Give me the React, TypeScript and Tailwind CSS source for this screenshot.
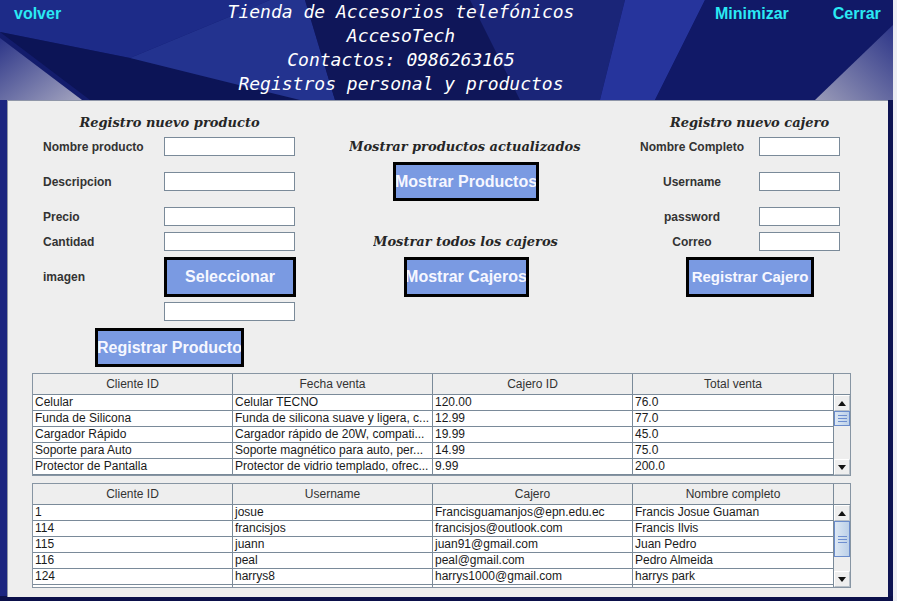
import React from 'react';

const SANS = "font-['Liberation_Sans',Arial,sans-serif]";

function Background() {
  return (
    <svg className="absolute inset-0 h-full w-full" viewBox="0 0 893 601" preserveAspectRatio="none">
      <defs>
        <linearGradient id="wedgeL" x1="0" y1="0" x2="1" y2="1">
          <stop offset="0" stopColor="#2c3588" />
          <stop offset="1" stopColor="#a3a4bf" />
        </linearGradient>
        <linearGradient id="wedgeR" x1="1" y1="0" x2="0" y2="1">
          <stop offset="0" stopColor="#2c3588" />
          <stop offset="1" stopColor="#9a9bb8" />
        </linearGradient>
      </defs>
      <rect x="0" y="0" width="893" height="601" fill="#131c6c" />
      <polygon points="0,0 270,0 130,58 0,32" fill="#1d2b88" />
      <polygon points="0,32 130,58 360,72 330,100 90,100" fill="#0c1456" />
      <polygon points="130,58 270,0 305,0 335,100 300,100" fill="#23338f" />
      <polygon points="0,38 82,100 0,100" fill="url(#wedgeL)" />
      <polygon points="305,0 625,0 600,100 335,100" fill="#0f1659" />
      <polygon points="470,0 625,0 600,100 520,100" fill="#1a2578" />
      <polygon points="625,0 705,0 655,100 600,100" fill="#26349c" />
      <polygon points="705,0 893,0 893,35 835,100 655,100" fill="#111967" />
      <polygon points="893,25 893,100 815,100" fill="url(#wedgeR)" />
      <rect x="0" y="100" width="8" height="501" fill="#1b2580" />
      <rect x="886" y="100" width="7" height="501" fill="#0d1352" />
      <rect x="0" y="596" width="893" height="5" fill="#0b104a" />
    </svg>
  );
}

function Field({ w = 'w-[131px]' }: { w?: string }) {
  return <div className={`h-[19px] ${w} shrink-0 border border-[#7a8a99] bg-white`} />;
}

function BlueButton({ label, className }: { label: string; className: string }) {
  return (
    <div
      className={`flex shrink-0 items-center justify-center overflow-hidden whitespace-nowrap border-[3px] border-black bg-[#7a9ae2] font-bold text-[#f6f7ff] ${className}`}
    >
      {label}
    </div>
  );
}

function Arrow({ up }: { up?: boolean }) {
  return (
    <div className="flex h-[16px] items-center justify-center border border-t-white border-l-white border-b-[#b8c0c8] border-r-[#b8c0c8] bg-[#eeeeee]">
      <svg width="8" height="5" viewBox="0 0 8 5">
        {up ? <polygon points="0,5 8,5 4,0" fill="#111" /> : <polygon points="0,0 8,0 4,5" fill="#111" />}
      </svg>
    </div>
  );
}

function Thumb({ h }: { h: string }) {
  return (
    <div className={`${h} flex flex-col items-center justify-center gap-[2px] border border-[#6a8ccb] bg-gradient-to-r from-[#dde8f4] to-[#bcd0e8]`}>
      <div className="h-px w-[9px] bg-[#6d8ed0]" />
      <div className="h-px w-[9px] bg-[#6d8ed0]" />
      <div className="h-px w-[9px] bg-[#6d8ed0]" />
    </div>
  );
}

const colW = ['w-[200px]', 'w-[200px]', 'w-[200px]', 'w-[201px]'];

function DataTable({
  headers,
  rows,
  bodyH,
  thumbH,
}: {
  headers: string[];
  rows: string[][];
  bodyH: string;
  thumbH: string;
}) {
  return (
    <div className={`ml-[24px] w-[819px] border border-[#8795a3] bg-[#eeeeee] ${SANS} text-[12px]`}>
      <div className="flex h-[21px] border-b border-[#7a8a99] text-[#333]">
        {headers.map((h, i) => (
          <div key={i} className={`${colW[i]} shrink-0 border-r border-[#7a8a99] text-center leading-[20px]`}>
            {h}
          </div>
        ))}
        <div className="w-[16px] shrink-0" />
      </div>
      <div className="flex">
        <div className={`${bodyH} overflow-hidden bg-white`}>
          {rows.map((r, ri) => (
            <div key={ri} className="flex h-[16px] border-b border-[#7a8a99] text-[#1a1a1a]">
              {r.map((c, ci) => (
                <div
                  key={ci}
                  className={`${colW[ci]} shrink-0 overflow-hidden whitespace-nowrap border-r border-[#7a8a99] pl-[2px] leading-[15px]`}
                >
                  {c}
                </div>
              ))}
            </div>
          ))}
        </div>
        <div className="flex w-[16px] shrink-0 flex-col bg-[#eeeeee]">
          <Arrow up />
          <div className="flex-1">
            <Thumb h={thumbH} />
          </div>
          <Arrow />
        </div>
      </div>
    </div>
  );
}

const ventas = [
  ['Celular', 'Celular TECNO', '120.00', '76.0'],
  ['Funda de Silicona', 'Funda de silicona suave y ligera, c...', '12.99', '77.0'],
  ['Cargador Rápido', 'Cargador rápido de 20W, compati...', '19.99', '45.0'],
  ['Soporte para Auto', 'Soporte magnético para auto, per...', '14.99', '75.0'],
  ['Protector de Pantalla', 'Protector de vidrio templado, ofrec...', '9.99', '200.0'],
];

const cajeros = [
  ['1', 'josue', 'Francisguamanjos@epn.edu.ec', 'Francis Josue Guaman'],
  ['114', 'francisjos', 'francisjos@outlook.com', 'Francis Ilvis'],
  ['115', 'juann', 'juan91@gmail.com', 'Juan Pedro'],
  ['116', 'peal', 'peal@gmail.com', 'Pedro Almeida'],
  ['124', 'harrys8', 'harrys1000@gmail.com', 'harrys park'],
  ['', '', '', ''],
];

const TITLE = "font-['DejaVu_Serif',serif] text-[13px] font-bold italic text-[#262626] leading-[16px] whitespace-nowrap";
const LABEL = 'text-[12px] font-bold text-[#333]';

export default function App() {
  return (
    <div className={`h-[601px] w-[897px] overflow-hidden bg-[#ecedf3] ${SANS}`}>
      <div className="relative h-[601px] w-[893px] overflow-hidden">
        <Background />

        <div className="relative flex h-[100px]">
          <div className="w-[200px] pl-[14px] pt-[5px] text-[16px] font-bold leading-[18px] text-[#2ae9f4]">volver</div>
          <div className="w-[402px] text-center font-['DejaVu_Sans_Mono',monospace] text-[18px] italic leading-[24px] text-white">
            <div>Tienda de Accesorios telefónicos</div>
            <div>AccesoTech</div>
            <div>Contactos: 0986263165</div>
            <div>Registros personal y productos</div>
          </div>
          <div className="ml-[113px] pt-[5px] text-[16px] font-bold leading-[18px] text-[#2ae9f4]">Minimizar</div>
          <div className="ml-[44px] pt-[5px] text-[16px] font-bold leading-[18px] text-[#2ae9f4]">Cerrar</div>
        </div>

        <div className="relative ml-[7px] h-[497px] w-[881px] border-l border-t border-[#8f96a8] bg-[#eeeeee]">
          <div className="flex h-[272px]">
            {/* producto */}
            <div className="ml-[35px] flex w-[253px] flex-col">
              <div className={`h-[36px] pt-[14px] text-center ${TITLE}`}>Registro nuevo producto</div>
              <div className="flex h-[19px] items-center">
                <div className={`w-[121px] ${LABEL}`}>Nombre producto</div>
                <Field />
              </div>
              <div className="mt-[16px] flex h-[19px] items-center">
                <div className={`w-[121px] ${LABEL}`}>Descripcion</div>
                <Field />
              </div>
              <div className="mt-[16px] flex h-[19px] items-center">
                <div className={`w-[121px] ${LABEL}`}>Precio</div>
                <Field />
              </div>
              <div className="mt-[6px] flex h-[19px] items-center">
                <div className={`w-[121px] ${LABEL}`}>Cantidad</div>
                <Field />
              </div>
              <div className="mt-[6px] flex h-[40px] items-center">
                <div className={`w-[121px] ${LABEL}`}>imagen</div>
                <BlueButton label="Seleccionar" className="h-[40px] w-[132px] text-[16px]" />
              </div>
              <div className="mt-[5px] flex">
                <div className="w-[121px]" />
                <Field />
              </div>
              <BlueButton label="Registrar Producto" className="ml-[52px] mt-[7px] h-[39px] w-[149px] text-[16px]" />
            </div>

            {/* mostrar */}
            <div className="flex w-[340px] flex-col items-center">
              <div className={`mt-[38px] h-[17px] w-[234px] overflow-hidden ${TITLE}`}>Mostrar productos actualizados</div>
              <BlueButton label="Mostrar Productos" className="mt-[6px] h-[39px] w-[146px] text-[16px]" />
              <div className={`mt-[33px] h-[17px] w-[186px] overflow-hidden ${TITLE}`}>Mostrar todos los cajeros</div>
              <BlueButton label="Mostrar Cajeros" className="mt-[6px] h-[40px] w-[125px] text-[16px]" />
            </div>

            {/* cajero */}
            <div className="flex w-[252px] flex-col">
              <div className={`h-[36px] w-[227px] pt-[14px] text-center ${TITLE}`}>Registro nuevo cajero</div>
              <div className="flex h-[19px] items-center">
                <div className={`w-[112px] text-center ${LABEL}`}>Nombre Completo</div>
                <div className="ml-[11px]"><Field w="w-[81px]" /></div>
              </div>
              <div className="mt-[16px] flex h-[19px] items-center">
                <div className={`w-[112px] text-center ${LABEL}`}>Username</div>
                <div className="ml-[11px]"><Field w="w-[81px]" /></div>
              </div>
              <div className="mt-[16px] flex h-[19px] items-center">
                <div className={`w-[112px] text-center ${LABEL}`}>password</div>
                <div className="ml-[11px]"><Field w="w-[81px]" /></div>
              </div>
              <div className="mt-[6px] flex h-[19px] items-center">
                <div className={`w-[112px] text-center ${LABEL}`}>Correo</div>
                <div className="ml-[11px]"><Field w="w-[81px]" /></div>
              </div>
              <BlueButton label="Registrar Cajero" className="ml-[50px] mt-[6px] h-[40px] w-[128px] text-[15px]" />
            </div>
          </div>

          <DataTable
            headers={['Cliente ID', 'Fecha venta', 'Cajero ID', 'Total venta']}
            rows={ventas}
            bodyH="h-[80px]"
            thumbH="h-[15px]"
          />
          <div className="h-[7px]" />
          <DataTable
            headers={['Cliente ID', 'Username', 'Cajero', 'Nombre completo']}
            rows={cajeros}
            bodyH="h-[82px]"
            thumbH="h-[36px]"
          />
        </div>
      </div>
    </div>
  );
}
